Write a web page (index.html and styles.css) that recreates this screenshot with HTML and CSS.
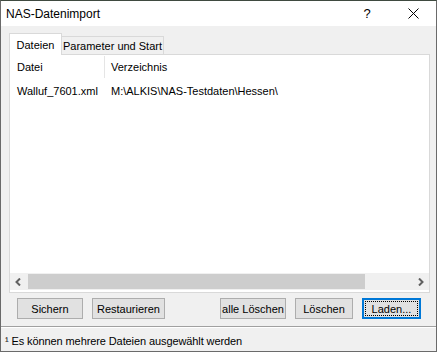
FILE: index.html
```html
<!DOCTYPE html>
<html lang="de">
<head>
<meta charset="utf-8">
<title>NAS-Datenimport</title>
<link rel="stylesheet" href="styles.css">
</head>
<body>
<div class="window">
  <div class="titlebar">
    <span class="title">NAS-Datenimport</span>
    <span class="cap-btn help">?</span>
    <span class="cap-btn close">
      <svg width="11" height="11" viewBox="0 0 11 11"><path d="M0.5 0.5 L10.5 10.5 M10.5 0.5 L0.5 10.5" stroke="#000" stroke-width="1" fill="none"/></svg>
    </span>
  </div>
  <div class="body">
    <div class="tabs">
      <div class="tab tab-active">Dateien</div>
      <div class="tab tab-idle">Parameter und Start</div>
    </div>
    <div class="panel">
      <div class="listview">
        <div class="lv-header">
          <div class="col col1">Datei</div>
          <div class="col-sep"></div>
          <div class="col col2">Verzeichnis</div>
        </div>
        <div class="lv-row">
          <div class="col col1">Walluf_7601.xml</div>
          <div class="col-gap"></div>
          <div class="col col2">M:\ALKIS\NAS-Testdaten\Hessen\</div>
        </div>
        <div class="lv-fill"></div>
        <div class="hscroll">
          <div class="sb-arrow">
            <svg width="7" height="8" viewBox="0 0 7 8"><path d="M5 0.5 L1.5 4 L5 7.5" stroke="#606060" stroke-width="2" fill="none"/></svg>
          </div>
          <div class="sb-track"><div class="sb-thumb"></div></div>
          <div class="sb-arrow">
            <svg width="7" height="8" viewBox="0 0 7 8"><path d="M2 0.5 L5.5 4 L2 7.5" stroke="#606060" stroke-width="2" fill="none"/></svg>
          </div>
        </div>
      </div>
    </div>
    <div class="buttons">
      <button class="btn w-sichern">Sichern</button>
      <button class="btn w-rest">Restaurieren</button>
      <div class="spacer"></div>
      <button class="btn w-alle">alle Löschen</button>
      <button class="btn w-loe">Löschen</button>
      <button class="btn btn-default w-laden"><span class="focus">Laden...</span></button>
    </div>
  </div>
  <div class="statusbar">¹ Es können mehrere Dateien ausgewählt werden</div>
</div>
</body>
</html>
```
FILE: styles.css
```css
html, body {
  margin: 0;
  padding: 0;
  width: 437px;
  height: 352px;
  overflow: hidden;
  background: #f0f0f0;
}
.window {
  width: 437px;
  height: 352px;
  box-sizing: border-box;
  border: 1px solid #6a6a6a;
  border-top-color: #3f4a40;
  display: flex;
  flex-direction: column;
  font-family: "Liberation Sans", Arial, sans-serif;
  font-size: 11px;
  color: #000;
}
.titlebar {
  height: 25px;
  flex: none;
  background: #fff;
  display: flex;
  align-items: center;
  padding-left: 5px;
}
.title {
  flex: 1;
  font-size: 12px;
}
.cap-btn {
  width: 46px;
  height: 25px;
  display: flex;
  align-items: center;
  justify-content: center;
}
.help {
  font-size: 13px;
}
.body {
  height: 300px;
  flex: none;
  box-sizing: border-box;
  padding: 7px 6px 0 8px;
  display: flex;
  flex-direction: column;
  background: #f0f0f0;
}
.tabs {
  height: 21px;
  display: flex;
  align-items: flex-end;
  position: relative;
  z-index: 2;
}
.tab {
  box-sizing: border-box;
  display: flex;
  align-items: center;
  justify-content: center;
  border: 1px solid #d9d9d9;
  border-bottom: none;
}
.tab-active {
  width: 53px;
  height: 22px;
  margin-bottom: -1px;
  background: #fff;
  padding-top: 1px;
}
.tab-idle {
  width: 102px;
  height: 18px;
  border-left: none;
  background: #f0f0f0;
  padding-top: 1px;
}
.panel {
  width: 421px;
  height: 239px;
  box-sizing: border-box;
  border: 1px solid #d9d9d9;
  background: #fff;
  padding: 0 0 2px 0;
  display: flex;
}
.listview {
  flex: 1;
  display: flex;
  flex-direction: column;
}
.lv-header {
  height: 24px;
  display: flex;
  align-items: center;
}
.lv-row {
  height: 17px;
  margin-top: 3px;
  display: flex;
  align-items: center;
}
.col {
  box-sizing: border-box;
  white-space: nowrap;
}
.col1 {
  width: 94px;
  padding-left: 7px;
}
.col2 {
  padding-left: 6px;
}
.col-sep {
  width: 1px;
  height: 22px;
  align-self: flex-start;
  margin-top: 1px;
  background: #e5e5e5;
}
.col-gap {
  width: 1px;
}
.lv-fill {
  flex: 1;
}
.hscroll {
  height: 17px;
  display: flex;
  background: #f0f0f0;
}
.sb-arrow {
  width: 17px;
  height: 17px;
  display: flex;
  align-items: center;
  justify-content: center;
}
.sb-track {
  flex: 1;
  display: flex;
}
.sb-thumb {
  width: 337px;
  margin: 1px 0 1px 1px;
  background: #cdcdcd;
}
.buttons {
  display: flex;
  margin-top: 5px;
  padding-left: 8px;
}
.spacer {
  flex: 1;
}
.btn {
  box-sizing: border-box;
  height: 21px;
  margin: 0 9px 0 0;
  padding: 0;
  border: 1px solid #adadad;
  background: #e1e1e1;
  font-family: "Liberation Sans", Arial, sans-serif;
  font-size: 11px;
  color: #000;
  display: flex;
  align-items: center;
  justify-content: center;
}
.w-sichern { width: 66px; }
.w-rest { width: 73px; }
.w-alle { width: 66px; }
.w-loe { width: 58px; }
.w-laden {
  width: 59px;
  margin-right: 9px;
}
.btn-default {
  border: 2px solid #0078d7;
  padding: 1px;
}
.focus {
  flex: 1;
  align-self: stretch;
  display: flex;
  align-items: center;
  justify-content: center;
  border: 1px dotted #000;
}
.statusbar {
  flex: 1;
  border-top: 1px solid #a0a0a0;
  background: #f0f0f0;
  font-size: 11px;
  letter-spacing: -0.1px;
  padding: 4px 0 0 4px;
  display: flex;
  align-items: center;
  box-shadow: inset 0 1px 0 #fff;
}
```
